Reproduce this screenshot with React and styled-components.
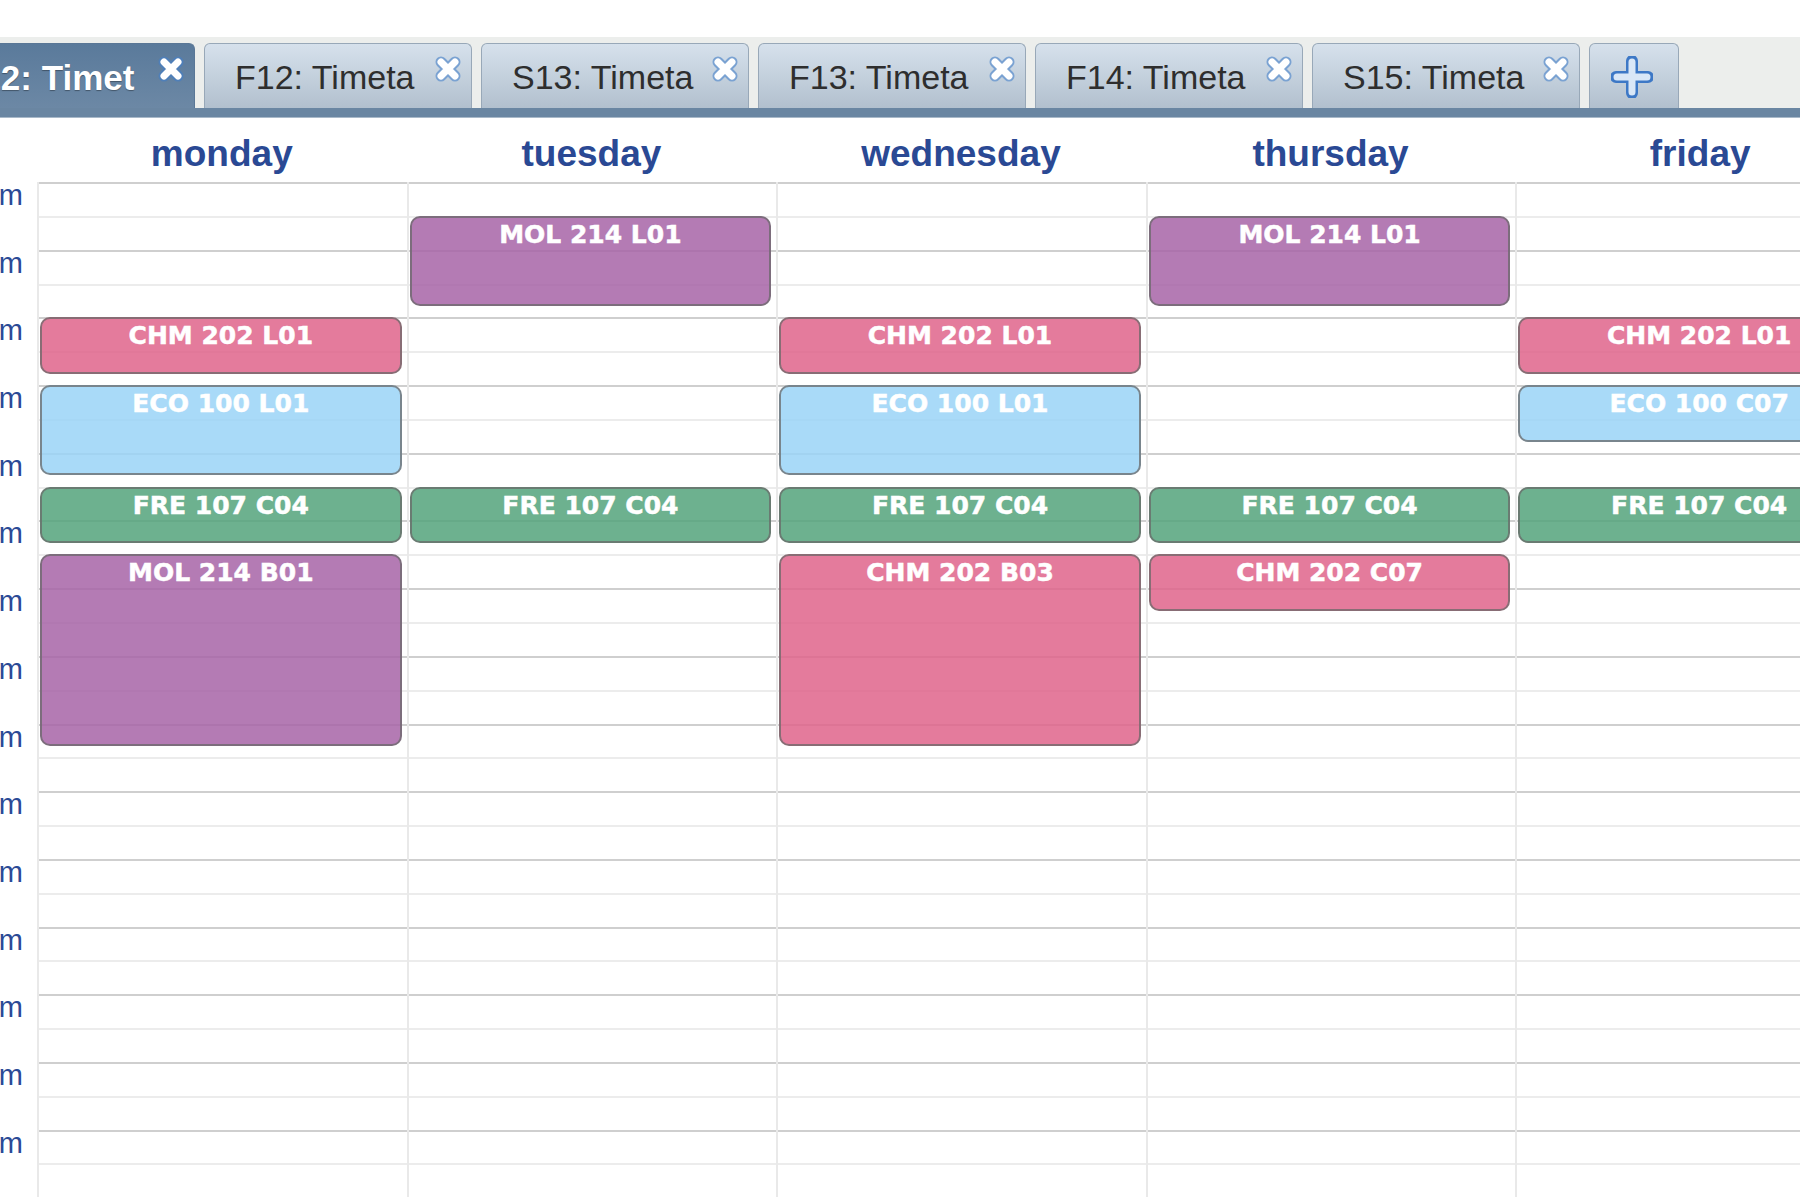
import React from "react";
import styled, { createGlobalStyle } from "styled-components";

const HOUR = 67.7;

const GlobalStyle = createGlobalStyle`
  html, body {
    margin: 0;
    padding: 0;
    background: #fff;
    overflow: hidden;
  }
  body {
    font-family: "Liberation Sans", Arial, sans-serif;
  }
`;

const Page = styled.div`
  width: 1800px;
  height: 1200px;
  overflow: hidden;
  display: flex;
  flex-direction: column;
`;

const TabBar = styled.div`
  margin-top: 37px;
  height: 71px;
  background: #eceeec;
  display: flex;
  align-items: flex-end;
`;

const TabRow = styled.div`
  display: flex;
  align-items: flex-end;
  gap: 9px;
  margin-left: -73px;
`;

const Tab = styled.div`
  box-sizing: border-box;
  width: ${(p) => (p.$add ? "90px" : "268px")};
  height: 65px;
  display: flex;
  align-items: flex-start;
  justify-content: ${(p) => (p.$add ? "center" : "flex-start")};
  padding: ${(p) => (p.$add ? "12px 4px 0 0" : "14px 8px 0 30px")};
  border: 1.5px solid ${(p) => (p.$active ? "#5a7796" : "#98a8b8")};
  border-bottom: none;
  border-radius: 6px 6px 0 0;
  background: ${(p) =>
    p.$active
      ? "linear-gradient(to bottom, #5a7a9b, #6c88a5)"
      : "linear-gradient(to bottom, #d6e1ec, #b2c0ce)"};
`;

const TabLabel = styled.span`
  font-family: "Liberation Sans", Arial, sans-serif;
  font-size: ${(p) => (p.$active ? "35px" : "34px")};
  font-weight: ${(p) => (p.$active ? 700 : 400)};
  color: ${(p) => (p.$active ? "#fff" : "#2e2e2e")};
  text-shadow: ${(p) => (p.$active ? "0 1px 1px rgba(0,0,0,0.35)" : "none")};
  white-space: nowrap;
`;

const CloseBox = styled.span`
  display: flex;
  margin-top: -4px;
  margin-left: auto;
`;

const Strip = styled.div`
  height: 9px;
  background: #6a86a2;
  border-bottom: 1px solid #a9b9c9;
`;

const Calendar = styled.div`
  display: grid;
  grid-template-columns: 37px repeat(5, 369.6px);
  width: 1885px;
`;

const DayName = styled.div`
  box-sizing: border-box;
  height: 64px;
  padding-top: 7px;
  line-height: 57px;
  text-align: center;
  font-family: "Liberation Sans", Arial, sans-serif;
  font-size: 37px;
  font-weight: 700;
  color: #2a4994;
`;

const TimeColumn = styled.div`
  display: flex;
  flex-direction: column;
  overflow: hidden;
`;

const TimeLabel = styled.div`
  height: ${HOUR}px;
  box-sizing: border-box;
  display: flex;
  justify-content: flex-end;
  align-items: flex-start;
  padding-right: 14px;
  white-space: nowrap;
  font-family: "Liberation Sans", Arial, sans-serif;
  font-size: 29px;
  line-height: 1;
  color: #2b4a96;
  margin-top: -1px;
  margin-bottom: 1px;
`;

const DayColumn = styled.div`
  position: relative;
  box-sizing: border-box;
  border-left: 2px solid #e9e9e9;
  display: flex;
  flex-direction: column;
`;

const Slot = styled.div`
  box-sizing: border-box;
  height: ${HOUR / 2}px;
  border-top: 2px solid ${(p) => (p.$hour ? "#cfcfcf" : "#ececec")};
`;

const palette = {
  pink: "rgba(223, 100, 139, 0.85)",
  blue: "rgba(154, 211, 247, 0.85)",
  green: "rgba(83, 163, 123, 0.85)",
  purple: "rgba(167, 100, 167, 0.85)",
};

const Event = styled.div`
  position: absolute;
  left: 1px;
  right: 5px;
  box-sizing: border-box;
  padding-top: 2px;
  border: 2px solid rgba(105, 105, 105, 0.75);
  border-radius: 10px;
  background: ${(p) => palette[p.$color]};
  text-align: center;
  font-family: "DejaVu Sans", Verdana, sans-serif;
  font-weight: 700;
  font-size: 25px;
  line-height: 1.2;
  color: #fff;
  -webkit-text-stroke: 0.5px #fff;
  white-space: nowrap;
  overflow: hidden;
`;

const CloseIcon = ({ stroke }) => (
  <svg width="30" height="30" viewBox="0 0 30 30">
    <path
      d="M8 8 L22 22 M22 8 L8 22"
      stroke={stroke}
      strokeWidth="11"
      strokeLinecap="round"
      fill="none"
    />
    <path
      d="M8 8 L22 22 M22 8 L8 22"
      stroke="#fff"
      strokeWidth="7"
      strokeLinecap="round"
      fill="none"
    />
  </svg>
);

const PlusIcon = () => (
  <svg width="42" height="42" viewBox="0 0 42 42">
    <path
      d="M21 5 V37 M5 21 H37"
      stroke="#3d78c6"
      strokeWidth="12"
      strokeLinecap="round"
      fill="none"
    />
    <path
      d="M21 6 V36 M6 21 H36"
      stroke="#d9e7f7"
      strokeWidth="7"
      strokeLinecap="round"
      fill="none"
    />
  </svg>
);

const tabs = [
  { label: "S12: Timet", active: true },
  { label: "F12: Timeta" },
  { label: "S13: Timeta" },
  { label: "F13: Timeta" },
  { label: "F14: Timeta" },
  { label: "S15: Timeta" },
];

const hours = [
  "8am", "9am", "10am", "11am", "12pm", "1pm", "2pm", "3pm",
  "4pm", "5pm", "6pm", "7pm", "8pm", "9pm", "10pm",
];

const days = [
  {
    name: "monday",
    events: [
      { code: "CHM 202 L01", color: "pink", start: 2, dur: 50 },
      { code: "ECO 100 L01", color: "blue", start: 3, dur: 80 },
      { code: "FRE 107 C04", color: "green", start: 4.5, dur: 50 },
      { code: "MOL 214 B01", color: "purple", start: 5.5, dur: 170 },
    ],
  },
  {
    name: "tuesday",
    events: [
      { code: "MOL 214 L01", color: "purple", start: 0.5, dur: 80 },
      { code: "FRE 107 C04", color: "green", start: 4.5, dur: 50 },
    ],
  },
  {
    name: "wednesday",
    events: [
      { code: "CHM 202 L01", color: "pink", start: 2, dur: 50 },
      { code: "ECO 100 L01", color: "blue", start: 3, dur: 80 },
      { code: "FRE 107 C04", color: "green", start: 4.5, dur: 50 },
      { code: "CHM 202 B03", color: "pink", start: 5.5, dur: 170 },
    ],
  },
  {
    name: "thursday",
    events: [
      { code: "MOL 214 L01", color: "purple", start: 0.5, dur: 80 },
      { code: "FRE 107 C04", color: "green", start: 4.5, dur: 50 },
      { code: "CHM 202 C07", color: "pink", start: 5.5, dur: 50 },
    ],
  },
  {
    name: "friday",
    events: [
      { code: "CHM 202 L01", color: "pink", start: 2, dur: 50 },
      { code: "ECO 100 C07", color: "blue", start: 3, dur: 50 },
      { code: "FRE 107 C04", color: "green", start: 4.5, dur: 50 },
    ],
  },
];

const slots = Array.from({ length: hours.length * 2 }, (_, i) => i);

const App = () => {
  return (
    <Page>
      <GlobalStyle />
      <TabBar>
        <TabRow>
          {tabs.map((t) => (
            <Tab key={t.label} $active={t.active}>
              <TabLabel $active={t.active}>{t.label}</TabLabel>
              <CloseBox>
                <CloseIcon stroke={t.active ? "#4f7fb8" : "#7aa2d2"} />
              </CloseBox>
            </Tab>
          ))}
          <Tab $add>
            <PlusIcon />
          </Tab>
        </TabRow>
      </TabBar>
      <Strip />

      <Calendar>
        <div />
        {days.map((d) => (
          <DayName key={d.name}>{d.name}</DayName>
        ))}

        <TimeColumn>
          {hours.map((h) => (
            <TimeLabel key={h}>{h}</TimeLabel>
          ))}
        </TimeColumn>
        {days.map((d) => (
          <DayColumn key={d.name}>
            {slots.map((s) => (
              <Slot key={s} $hour={s % 2 === 0} />
            ))}
            {d.events.map((e) => (
              <Event
                key={e.code + e.start}
                $color={e.color}
                style={{
                  top: e.start * HOUR,
                  height: (e.dur / 60) * HOUR,
                }}
              >
                {e.code}
              </Event>
            ))}
          </DayColumn>
        ))}
      </Calendar>
    </Page>
  );
};

export default App;
